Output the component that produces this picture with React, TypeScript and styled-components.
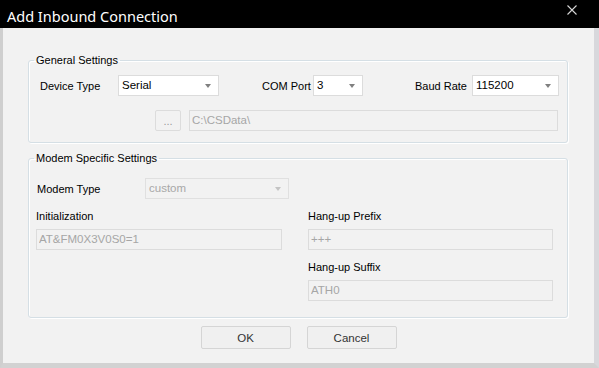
import styled, { createGlobalStyle } from "styled-components";

const GlobalStyle = createGlobalStyle`
  html, body {
    margin: 0;
    padding: 0;
    background: #f2f2f2;
  }
  body {
    font-family: "Liberation Sans", Arial, sans-serif;
    font-size: 11px;
    color: #000;
  }
`;

interface ComboProps {
  value: string;
  width: number;
  disabled?: boolean;
}

function Combo({ value, width, disabled }: ComboProps) {
  return (
    <ComboBox $width={width} $disabled={disabled}>
      <span>{value}</span>
      <Arrow $disabled={disabled} />
    </ComboBox>
  );
}

function App() {
  return (
    <>
      <GlobalStyle />
      <Window>
        <TitleBar>
          <Title>Add Inbound Connection</Title>
          <CloseIcon width="10" height="10" viewBox="0 0 10 10">
            <path d="M0.5 0.5 L9.5 9.5 M9.5 0.5 L0.5 9.5" stroke="#d6d6d6" strokeWidth="1.1" />
          </CloseIcon>
        </TitleBar>

        <Body>
          <Group>
            <Legend>General Settings</Legend>
            <Row $top={8}>
              <Label $width={78}>Device Type</Label>
              <Combo value="Serial" width={101} />
              <Label $width={51} $gap={43}>COM Port</Label>
              <Combo value="3" width={50} />
              <Label $width={57} $gap={52}>Baud Rate</Label>
              <Combo value="115200" width={87} />
            </Row>
            <Row $top={14} $indent={126}>
              <BrowseButton disabled>...</BrowseButton>
              <Field $width={369} value="C:\CSData\" disabled readOnly />
            </Row>
          </Group>

          <Group $second>
            <Legend>Modem Specific Settings</Legend>
            <Row $top={13} $indent={8}>
              <Label $width={108}>Modem Type</Label>
              <Combo value="custom" width={144} disabled />
            </Row>
            <FieldGrid>
              <FieldCell>
                <FieldLabel>Initialization</FieldLabel>
                <Field $width={246} value="AT&FM0X3V0S0=1" disabled readOnly />
              </FieldCell>
              <FieldCell>
                <FieldLabel>Hang-up Prefix</FieldLabel>
                <Field $width={245} value="+++" disabled readOnly />
              </FieldCell>
              <FieldCell />
              <FieldCell>
                <FieldLabel>Hang-up Suffix</FieldLabel>
                <Field $width={245} value="ATH0" disabled readOnly />
              </FieldCell>
            </FieldGrid>
          </Group>

          <ButtonBar>
            <DialogButton>OK</DialogButton>
            <DialogButton>Cancel</DialogButton>
          </ButtonBar>
        </Body>
      </Window>
    </>
  );
}

export default App;

const Window = styled.div`
  width: 599px;
  height: 368px;
  display: flex;
  flex-direction: column;
  overflow: hidden;
`;

const TitleBar = styled.div`
  height: 28px;
  flex: none;
  background: #000;
  display: flex;
  align-items: center;
  justify-content: space-between;
  padding: 0 22px 0 7px;
  box-sizing: border-box;
`;

const Title = styled.div`
  font-family: "Noto Sans", "Open Sans", sans-serif;
  font-size: 14.5px;
  color: #fff;
  margin-top: 3px;
`;

const CloseIcon = styled.svg`
  margin-top: -9px;
`;

const Body = styled.div`
  flex: 1;
  background: #f2f2f2;
  border-left: 3px solid #cfcfcf;
  border-right: 5px solid #d8d8dc;
  border-bottom: 5px solid #d2d2d2;
  padding: 25px 26px 0 25px;
  display: flex;
  flex-direction: column;
`;

const Group = styled.fieldset<{ $second?: boolean }>`
  margin: ${(p) => (p.$second ? "8px 0 0" : "0")};
  padding: 0 0 ${(p) => (p.$second ? "16px" : "11px")} 0;
  min-inline-size: 0;
  border: 1px solid #d5dfe5;
  border-radius: 3px;
  box-shadow: 1px 1px 0 #fff, inset 1px 1px 0 #fff;
`;

const Legend = styled.legend`
  margin-left: 5px;
  padding: 0 2px;
  line-height: 14px;
  height: 14px;
`;

const Row = styled.div<{ $top: number; $indent?: number }>`
  display: flex;
  align-items: center;
  margin-top: ${(p) => p.$top}px;
  padding-left: ${(p) => p.$indent ?? 11}px;
  height: 21px;
`;

const Label = styled.span<{ $width: number; $gap?: number }>`
  width: ${(p) => p.$width}px;
  margin-left: ${(p) => p.$gap ?? 0}px;
  flex: none;
  white-space: nowrap;
`;

const ComboBox = styled.div<{ $width: number; $disabled?: boolean }>`
  box-sizing: border-box;
  width: ${(p) => p.$width}px;
  height: 21px;
  flex: none;
  display: flex;
  align-items: center;
  justify-content: space-between;
  padding: 0 7px 0 3px;
  border: 1px solid ${(p) => (p.$disabled ? "#e0e0e0" : "#dcdcdc")};
  background: ${(p) => (p.$disabled ? "#f2f2f2" : "#fff")};
  color: ${(p) => (p.$disabled ? "#a8a8a8" : "#000")};
  font-size: 11.5px;
  span {
    margin-top: -1px;
  }
`;

const Arrow = styled.i<{ $disabled?: boolean }>`
  width: 0;
  height: 0;
  border-left: 3.5px solid transparent;
  border-right: 3.5px solid transparent;
  border-top: 4px solid ${(p) => (p.$disabled ? "#c4c4c4" : "#808080")};
`;

const BrowseButton = styled.button`
  box-sizing: border-box;
  width: 26px;
  height: 21px;
  flex: none;
  margin-right: 8px;
  padding: 0;
  border: 1px solid #dcdcdc;
  border-radius: 2px;
  background: #f2f2f2;
  color: #9a9a9a;
  font-family: inherit;
  font-size: 11px;
`;

const Field = styled.input<{ $width: number }>`
  box-sizing: border-box;
  width: ${(p) => p.$width}px;
  height: 21px;
  flex: none;
  margin: 0;
  padding: 0 2px 1px;
  border: 1px solid #dcdcdc;
  background: #f2f2f2;
  color: #a6a6a6;
  font-family: inherit;
  font-size: 11.5px;
  outline: none;
`;

const FieldGrid = styled.div`
  display: grid;
  grid-template-columns: 246px 245px;
  column-gap: 26px;
  row-gap: 10px;
  padding-left: 7px;
  margin-top: 10px;
`;

const FieldCell = styled.div`
  display: flex;
  flex-direction: column;
  gap: 6px;
`;

const FieldLabel = styled.span`
  line-height: 14px;
  height: 14px;
`;

const ButtonBar = styled.div`
  display: flex;
  justify-content: center;
  gap: 16px;
  margin-top: 8px;
  padding-left: 1px;
`;

const DialogButton = styled.button`
  box-sizing: border-box;
  width: 90px;
  height: 23px;
  padding: 0;
  border: 1px solid #d5d5d5;
  border-radius: 2px;
  background: #f0f0f0;
  color: #333;
  font-family: inherit;
  font-size: 11.5px;
`;
